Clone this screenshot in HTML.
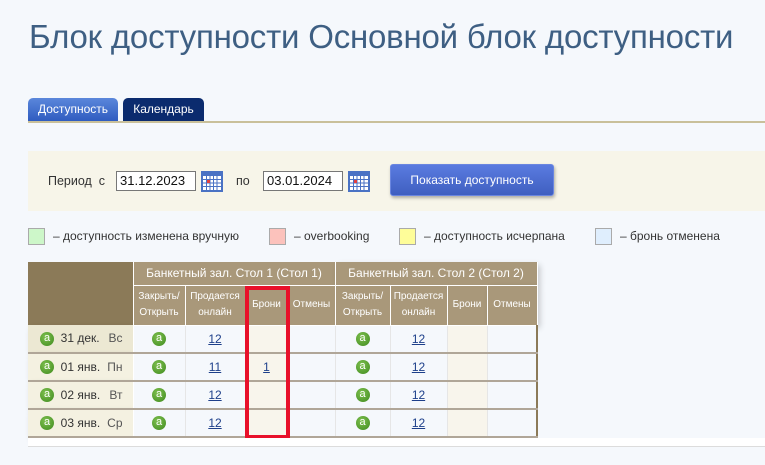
<!DOCTYPE html>
<html><head><meta charset="utf-8"><style>
*{margin:0;padding:0;box-sizing:border-box}
body{width:765px;height:465px;background:#f5f8fc;font-family:"Liberation Sans",sans-serif;position:relative;overflow:hidden;color:#333}
.a{position:absolute}
h1{position:absolute;left:29px;top:18px;font-weight:normal;font-size:33px;color:#3e5f83;white-space:nowrap;letter-spacing:-0.2px}
.tab{position:absolute;top:98px;height:23px;border-radius:5px 5px 0 0;color:#fff;font-size:12px;line-height:22px;text-align:center}
.inp{position:absolute;top:171px;height:20px;border:1px solid #777;background:#fff;font-size:13px;line-height:18px;padding-left:3px;color:#111}
.cal{position:absolute;top:170px;width:22px;height:22px}
.lg{position:absolute;top:228px;width:17px;height:17px;border:1px solid #aaa}
.lt{position:absolute;top:229px;font-size:12px;color:#333}
table{position:absolute;left:28px;top:262px;border-collapse:collapse;table-layout:fixed;font-size:12px}
td{padding:0;text-align:center;vertical-align:middle}
.h{background:#a9987a;color:#fff;border:1px solid #fff;border-top:0}
.hs{font-size:10px;line-height:16px}
.d td{height:28px;border-bottom:2px solid #b0a698;background:#f5f8fc;border-right:1px solid #e6e6e6}
.d td.b{background:#f8f5ec}
.d td.l{background:#f4f1e1;text-align:left;padding-left:12px;border-right:1px solid #fff;box-shadow:3px 3px 6px rgba(0,0,0,.18)}
.ic{display:inline-block;width:14px;height:14px;border-radius:50%;background:radial-gradient(circle at 40% 35%,#7ec04f,#3f8a1e);color:#fff;font-size:11px;line-height:13px;text-align:center;vertical-align:middle}
a{color:#1d3f8a;text-decoration:underline}
</style></head><body>
<h1>Блок доступности Основной блок доступности</h1>
<div class="tab" style="left:28px;width:90px;background:linear-gradient(#5b87db,#2f5cc0)">Доступность</div>
<div class="tab" style="left:123px;width:81px;background:#0b2b6e">Календарь</div>
<div class="a" style="left:28px;top:121px;width:737px;height:2px;background:#c9c09a"></div>
<div class="a" style="left:28px;top:151px;width:737px;height:60px;background:#f7f5e9"></div>
<div class="a" style="left:48px;top:174px;font-size:12.5px">Период&nbsp; с</div>
<div class="inp" style="left:116px;width:80px">31.12.2023</div>
<div class="a" style="left:236px;top:174px;font-size:12.5px">по</div>
<div class="inp" style="left:263px;width:80px">03.01.2024</div>
<svg class="cal" style="left:201px" viewBox="0 0 22 22"><rect x="0" y="1" width="22" height="21" fill="#4a72c4"/><g fill="#fff"><rect x="2" y="6" width="18" height="14"/></g><g stroke="#4a72c4" stroke-width="1"><path d="M2 9.5h18M2 13h18M2 16.5h18M5.5 6v14M9 6v14M12.5 6v14M16 6v14"/></g><rect x="6" y="10" width="3" height="3" fill="#e04040"/></svg>
<svg class="cal" style="left:348px" viewBox="0 0 22 22"><rect x="0" y="1" width="22" height="21" fill="#4a72c4"/><g fill="#fff"><rect x="2" y="6" width="18" height="14"/></g><g stroke="#4a72c4" stroke-width="1"><path d="M2 9.5h18M2 13h18M2 16.5h18M5.5 6v14M9 6v14M12.5 6v14M16 6v14"/></g><rect x="6" y="10" width="3" height="3" fill="#e04040"/></svg>
<div class="a" style="left:390px;top:164px;width:164px;height:32px;border-radius:3px;border:1px solid #6a86e0;background:linear-gradient(#5a7be0,#3f5fc0);box-shadow:1px 2px 3px rgba(0,0,0,.3);color:#fff;font-size:12px;line-height:30px;text-align:center">Показать доступность</div>
<div class="lg" style="left:28px;background:#cdf7c9"></div><div class="lt" style="left:53px">– доступность изменена вручную</div>
<div class="lg" style="left:269px;background:#fcc2bc"></div><div class="lt" style="left:294px">– overbooking</div>
<div class="lg" style="left:399px;background:#fefd99"></div><div class="lt" style="left:424px">– доступность исчерпана</div>
<div class="lg" style="left:595px;background:#dfeefd"></div><div class="lt" style="left:620px">– бронь отменена</div>
<table>
<colgroup><col style="width:105px"><col style="width:52px"><col style="width:60px"><col style="width:43px"><col style="width:47px"><col style="width:55px"><col style="width:57px"><col style="width:40px"><col style="width:50px"></colgroup>
<tr style="height:23px"><td rowspan="2" style="background:#8b7a58;border-right:1px solid #fff"></td><td colspan="4" class="h" style="font-size:12px">Банкетный зал. Стол 1 (Стол 1)</td><td colspan="4" class="h" style="font-size:12px;box-shadow:3px 3px 6px rgba(0,0,0,.2)">Банкетный зал. Стол 2 (Стол 2)</td></tr>
<tr style="height:40px"><td class="h hs">Закрыть/<br>Открыть</td><td class="h hs">Продается<br>онлайн</td><td class="h hs">Брони</td><td class="h hs">Отмены</td><td class="h hs">Закрыть/<br>Открыть</td><td class="h hs">Продается<br>онлайн</td><td class="h hs">Брони</td><td class="h hs" style="box-shadow:3px 3px 6px rgba(0,0,0,.2)">Отмены</td></tr>
<tr class="d"><td class="l" style="background:#ece8d3"><span class="ic">a</span>&nbsp; 31 дек. <span style="float:right;margin-right:10px;color:#555">Вс</span></td><td><span class="ic">a</span></td><td><a>12</a></td><td class="b"></td><td></td><td><span class="ic">a</span></td><td><a>12</a></td><td class="b"></td><td style="border-right:2px solid #8b7a58"></td></tr>
<tr class="d"><td class="l"><span class="ic">a</span>&nbsp; 01 янв. <span style="float:right;margin-right:10px;color:#555">Пн</span></td><td><span class="ic">a</span></td><td><a>11</a></td><td class="b"><a>1</a></td><td></td><td><span class="ic">a</span></td><td><a>12</a></td><td class="b"></td><td style="border-right:2px solid #8b7a58"></td></tr>
<tr class="d"><td class="l"><span class="ic">a</span>&nbsp; 02 янв. <span style="float:right;margin-right:10px;color:#555">Вт</span></td><td><span class="ic">a</span></td><td><a>12</a></td><td class="b"></td><td></td><td><span class="ic">a</span></td><td><a>12</a></td><td class="b"></td><td style="border-right:2px solid #8b7a58"></td></tr>
<tr class="d"><td class="l"><span class="ic">a</span>&nbsp; 03 янв. <span style="float:right;margin-right:10px;color:#555">Ср</span></td><td><span class="ic">a</span></td><td><a>12</a></td><td class="b"></td><td></td><td><span class="ic">a</span></td><td><a>12</a></td><td class="b"></td><td style="border-right:2px solid #8b7a58"></td></tr>
</table>
<div class="a" style="left:245px;top:286px;width:45px;height:153px;border:4px solid #e8102a"></div>
<div class="a" style="left:28px;top:438px;width:737px;height:8px;background:#fff"></div>
<div class="a" style="left:28px;top:446px;width:737px;height:1px;background:#dcdcdc"></div>
</body></html>
